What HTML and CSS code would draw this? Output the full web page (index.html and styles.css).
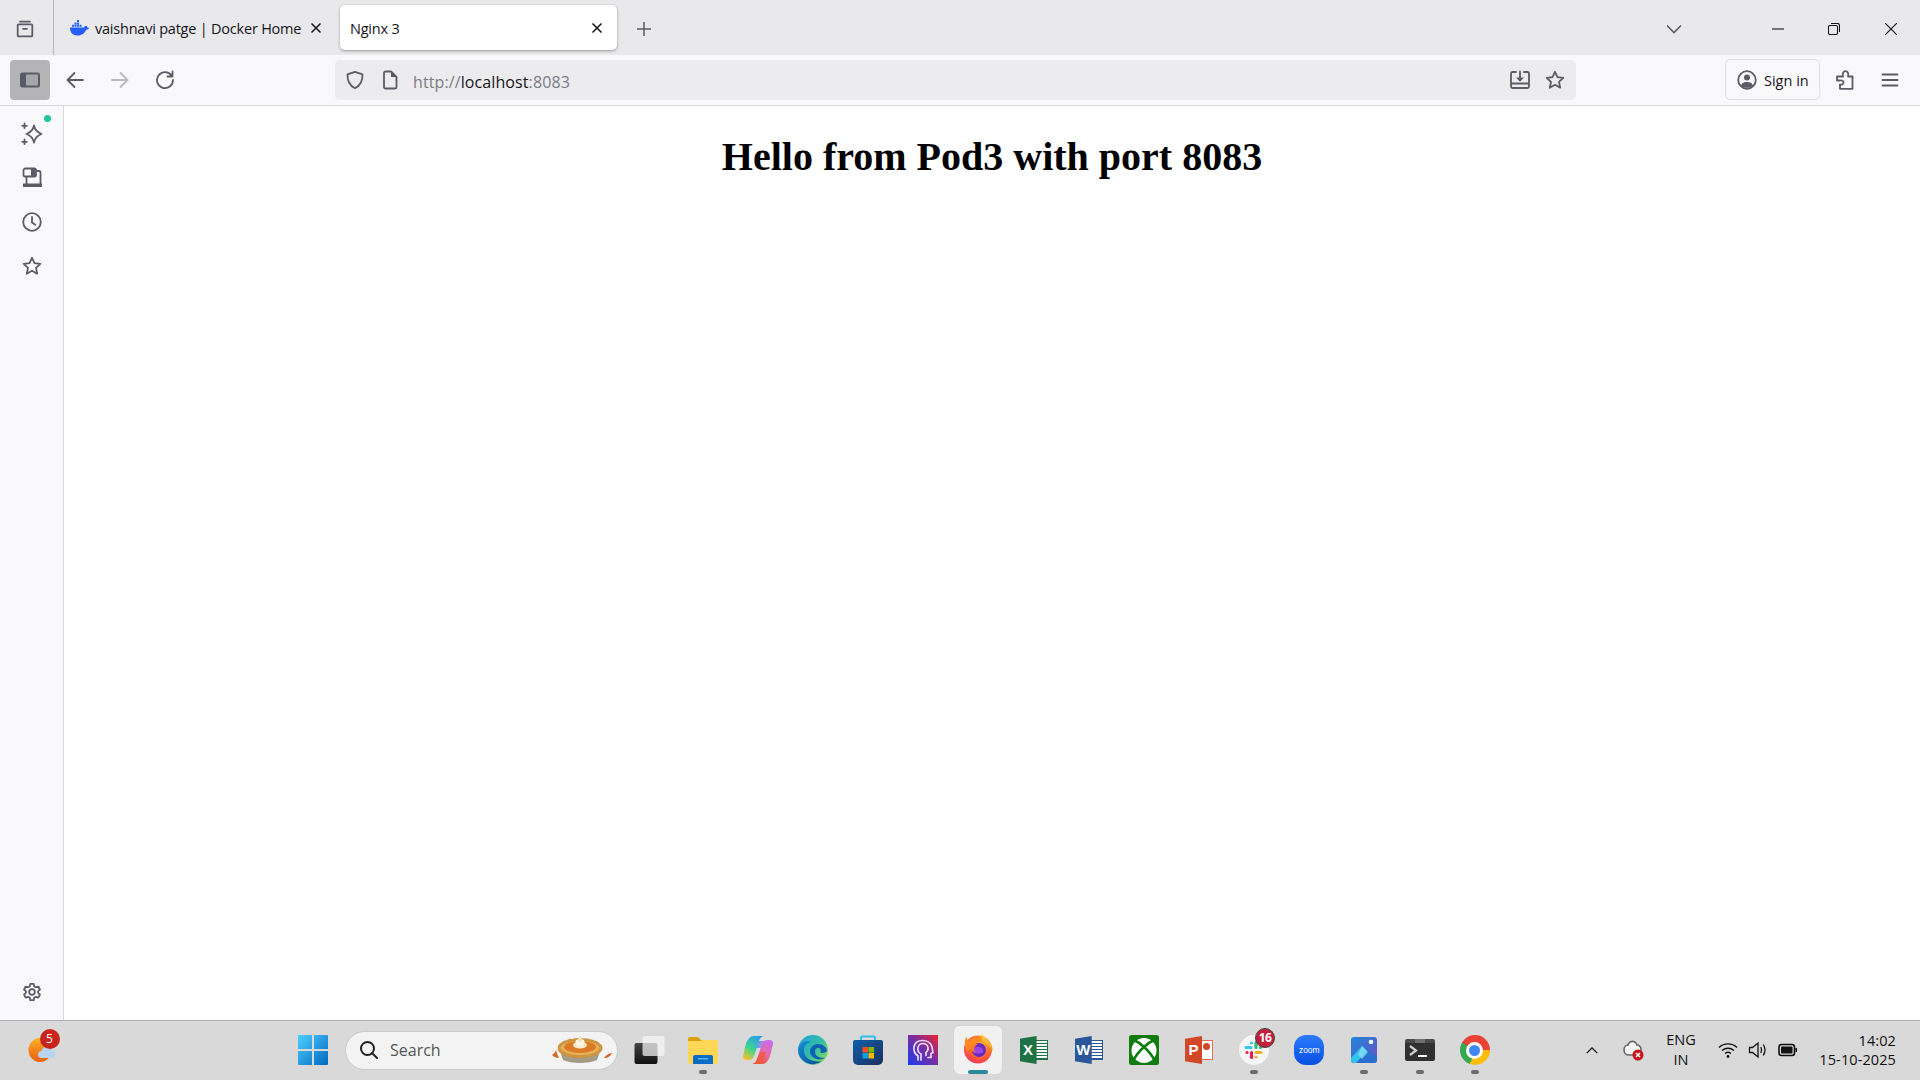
FILE: index.html
```html
<!DOCTYPE html>
<html lang="en">
<head>
<meta charset="utf-8">
<title>Nginx 3</title>
<link rel="stylesheet" href="styles.css">
</head>
<body>
<div class="app">
  <header class="tabbar">
    <div class="view-cell">
      <svg class="ic20" viewBox="0 0 20 20"><path d="M5 2.600h10M3.700 5.400h12.600a1 1 0 0 1 1 1v10a1 1 0 0 1-1 1H3.700a1 1 0 0 1-1-1v-10a1 1 0 0 1 1-1zM8 9.800h4"/></svg>
    </div>
    <div class="tab tab-docker">
      <svg class="fav" viewBox="0 0 20 16"><path fill="#2560ff" d="M1 7.500h14c.4-1 1.400-1.700 2.300-1.800.6.300 1 1 1 1.700.6 0 1.200.1 1.700.5-.6 1.400-1.800 1.800-2.900 1.800-1.200 3.300-4 5.800-8.600 5.800C3.700 15.500 1 12.500 1 7.500z"/><path fill="#2560ff" d="M3 4.800h2v2H3zM5.500 4.800h2v2h-2zM8 4.800h2v2H8zM10.500 4.800h2v2h-2zM5.500 2.400h2v2h-2zM8 2.400h2v2H8zM8 0h2v2H8z"/></svg>
      <span class="tab-title">vaishnavi patge | Docker Home</span>
      <svg class="tab-x" viewBox="0 0 12 12"><path d="M1.500 1.500l9 9M10.500 1.500l-9 9"/></svg>
    </div>
    <div class="tab tab-active">
      <span class="tab-title">Nginx 3</span>
      <svg class="tab-x" viewBox="0 0 12 12"><path d="M1.500 1.500l9 9M10.500 1.500l-9 9"/></svg>
    </div>
    <svg class="newtab" viewBox="0 0 16 16"><path d="M8 1v14M1 8h14"/></svg>
    <div class="win-controls">
      <svg class="chev" viewBox="0 0 16 10"><path d="M1 1.500l7 7 7-7"/></svg>
      <svg class="win-btn win-min" viewBox="0 0 12 12"><path d="M0 6h12"/></svg>
      <svg class="win-btn win-res" viewBox="0 0 12 12"><rect x=".5" y="2.500" width="9" height="9" rx="1.500"/><path d="M3 .5h6.500a2 2 0 0 1 2 2V9"/></svg>
      <svg class="win-btn win-close" viewBox="0 0 12 12"><path d="M0 0l12 12M12 0L0 12"/></svg>
    </div>
  </header>

  <nav class="toolbar">
    <div class="side-toggle">
      <svg class="ic20" viewBox="0 0 20 20"><rect class="panel" x="1" y="3.500" width="18" height="13" rx="1.500"/><rect class="solid" x="1" y="3.500" width="5" height="13" rx="1"/></svg>
    </div>
    <div class="nav-btn"><svg class="ic20" viewBox="0 0 20 20"><path d="M18 10H2.500M9.500 3l-7 7 7 7"/></svg></div>
    <div class="nav-btn nav-off"><svg class="ic20" viewBox="0 0 20 20"><path d="M2 10h15.500M10.500 3l7 7-7 7"/></svg></div>
    <div class="nav-btn"><svg class="ic20" viewBox="0 0 20 20"><path d="M16.500 5.500A8 8 0 1 0 18 10M17.500 1.500v5h-5"/></svg></div>
    <div class="urlbar">
      <svg class="ic20 shield" viewBox="0 0 20 20"><path d="M10 1.800l7.500 2.500c.2 6.500-2.300 11.500-7.500 14-5.200-2.500-7.700-7.500-7.500-14z"/></svg>
      <svg class="ic20 page" viewBox="0 0 20 20"><path d="M4 3a1.500 1.500 0 0 1 1.500-1.500H11L16.500 7v10a1.500 1.500 0 0 1-1.500 1.500H5.500A1.500 1.500 0 0 1 4 17z"/><path class="solid" d="M11 1.500L16.500 7H11z"/></svg>
      <span class="url"><span class="dim">http://</span>localhost<span class="dim">:8083</span></span>
      <svg class="ic20 dl" viewBox="0 0 20 20"><path d="M6 2H2.500A1.500 1.500 0 0 0 1 3.500v13A1.500 1.500 0 0 0 2.500 18h15a1.500 1.500 0 0 0 1.500-1.500v-13A1.500 1.500 0 0 0 17.500 2H14M1 13.500h18M10 1.500v8.500"/><path class="solid" d="M6 7.500h8L10 11.800z"/></svg>
      <svg class="ic20 star" viewBox="0 0 20 20"><path d="M10 1.800l2.500 5.400 5.800.7-4.300 4 1.200 5.800-5.200-2.900-5.200 2.900 1.200-5.800-4.300-4 5.800-.7z"/></svg>
    </div>
    <div class="signin">
      <svg class="ic20" viewBox="0 0 20 20"><circle cx="10" cy="10" r="8.800"/><circle class="solid" cx="10" cy="7.500" r="3"/><path class="solid" d="M4 15.500c1-3 3.500-3.500 6-3.500s5 .5 6 3.500c-1.500 1.500-3.500 2.300-6 2.300s-4.500-.8-6-2.300z"/></svg>
      <span class="signin-text">Sign in</span>
    </div>
    <div class="tool-btn"><svg class="ic20" viewBox="0 0 20 20"><path d="M8 6.500C7 3.500 8.500 1.200 10.500 1.200S14 3.500 13 6.500h4.500v12.300H5v-4.300c2 .5 3.500-.5 3.500-2s-1.500-2.500-3.500-2H2V6.500z"/></svg></div>
    <div class="tool-btn"><svg class="ic20" viewBox="0 0 20 20"><path d="M2.500 4.500h15M2.500 10h15M2.500 15.500h15"/></svg></div>
  </nav>

  <main class="main">
    <aside class="sidebar">
      <div class="side-item side-ai">
        <svg class="ic-ai" viewBox="0 0 24 24"><path d="M14 3.500c1 4.500 3.200 7 7.500 8.500-4.300 1.500-6.500 4-7.500 8.500-1-4.500-3.200-7-7.500-8.500C10.800 10.500 13 8 14 3.500zM4.500 1.500v4.500M2.200 3.800h4.600M4.500 17.500V22M2.200 19.800h4.600"/></svg>
      </div>
      <div class="side-item">
        <svg class="ic-ai" viewBox="0 0 24 24"><rect x="3.500" y="2.500" width="12.500" height="8" rx="1.800"/><rect class="solid" x="11" y="3" width="4.500" height="7"/><path d="M17.500 5h1.500a1.500 1.500 0 0 1 1.500 1.500V18M6.500 11v7"/><path class="solid" d="M3 17.500h19v3.500H3z"/></svg>
      </div>
      <div class="side-item">
        <svg class="ic20" viewBox="0 0 20 20"><circle cx="10" cy="10" r="8.800"/><path d="M10 5v5.500l3.300 2.200"/></svg>
      </div>
      <div class="side-item">
        <svg class="ic20" viewBox="0 0 20 20"><path d="M10 1.800l2.500 5.400 5.800.7-4.300 4 1.200 5.800-5.200-2.900-5.200 2.900 1.200-5.800-4.300-4 5.800-.7z"/></svg>
      </div>
      <div class="side-item side-gear">
        <svg class="ic20" viewBox="0 0 20 20"><circle cx="10" cy="10" r="2.800"/><path d="M8.300 1.800h3.400l.5 2.500 1.700 1 2.400-.8 1.700 3-1.900 1.600v1.800l1.900 1.700-1.700 3-2.400-.8-1.700 1-.5 2.400H8.300l-.5-2.400-1.700-1-2.400.8-1.700-3 1.900-1.700V9.100L2 7.500l1.700-3 2.400.8 1.700-1z"/></svg>
      </div>
    </aside>
    <section class="content">
      <h1>Hello from Pod3 with port 8083</h1>
    </section>
  </main>

  <footer class="taskbar">
    <div class="weather">
      <svg class="weather-ic" viewBox="0 0 32 32"><defs><linearGradient id="sun" x1="0" y1="0" x2="0" y2="1"><stop offset="0" stop-color="#fbb02a"/><stop offset="1" stop-color="#ea5f0c"/></linearGradient></defs><ellipse cx="14" cy="14" rx="11.500" ry="12" fill="url(#sun)"/><path fill="#b9d3f2" d="M15.500 22a3.500 3.500 0 0 1 0-7A5.500 5.500 0 0 1 26 14.500a3.800 3.800 0 0 1 .5 7.500z"/></svg>
      <span class="wx-badge">5</span>
    </div>
    <div class="cell start-cell">
      <svg class="ic-start" viewBox="0 0 30 30"><defs><linearGradient id="win" x1="0" y1="0" x2="1" y2="1"><stop offset="0" stop-color="#4fd0ff"/><stop offset="1" stop-color="#0067c0"/></linearGradient></defs><path fill="url(#win)" d="M0 1a1 1 0 0 1 1-1h13v14H0zM16 0h13a1 1 0 0 1 1 1v13H16zM0 16h14v14H1a1 1 0 0 1-1-1zM16 16h14v13a1 1 0 0 1-1 1H16z"/></svg>
    </div>
    <div class="search">
      <svg class="search-ic" viewBox="0 0 20 20"><circle cx="8.500" cy="8.500" r="6.500"/><path d="M13 13l5 5"/></svg>
      <span class="search-text">Search</span>
      <svg class="pie" viewBox="0 0 62 30"><path fill="#d9642a" d="M1 20c2-1.500 3-2.500 4-5 1 3 2 7 3 8-3 0-5-1-7-3zM61 18c-3 .5-6 2-8 5 3 .5 6-1 8-5z"/><path fill="#a59c86" d="M9 16c6 6 34 6 40 0l-3 9c-8 4-26 4-34 0z"/><ellipse cx="29" cy="13" rx="21" ry="8.500" fill="#e3b05c" stroke="#cf9440" stroke-width="3" stroke-dasharray="3 2.500" stroke-linecap="round"/><ellipse cx="29" cy="12" rx="16" ry="6" fill="#dd7a24"/><ellipse cx="29" cy="10" rx="7" ry="3.500" fill="#f9edd0"/><ellipse cx="29" cy="7" rx="4.500" ry="3" fill="#fff8e8"/><ellipse cx="29" cy="4.500" rx="2" ry="3" fill="#f4e2bc"/></svg>
    </div>
    <div class="cell">
      <svg class="ic30 ovf" viewBox="-1.500 0 30 30"><defs><linearGradient id="tvk" x1="0" y1="0" x2="0" y2="1"><stop offset="0" stop-color="#444"/><stop offset="1" stop-color="#111"/></linearGradient></defs><rect x="0" y="8" width="23" height="21" rx="2" fill="url(#tvk)"/><rect x="8" y="1" width="22" height="20" rx="2" fill="#f6f6f6" fill-opacity=".72"/></svg>
    </div>
    <div class="cell has-dot">
      <svg class="ic30" viewBox="0 0 30 30"><path fill="#d9a20a" d="M0 4a2 2 0 0 1 2-2h8l3 3h17v6H0z"/><path fill="#ffd655" d="M0 6h12.500L15 5h15v22a2 2 0 0 1-2 2H2a2 2 0 0 1-2-2z"/><path fill="#0a6cc4" d="M5 22a2 2 0 0 1 2-2h16a2 2 0 0 1 2 2v7H5z"/><path fill="#56b4ee" d="M10 23h10v1.500H10z"/></svg>
    </div>
    <div class="cell">
      <svg class="ic30" viewBox="0 0 30 30"><defs><linearGradient id="cpa" x1=".7" y1="0" x2=".2" y2="1"><stop offset="0" stop-color="#2a9df0"/><stop offset=".55" stop-color="#3dd68c"/><stop offset="1" stop-color="#f6c12d"/></linearGradient><linearGradient id="cpb" x1=".7" y1="0" x2=".3" y2="1"><stop offset="0" stop-color="#c96de8"/><stop offset=".55" stop-color="#e86aa8"/><stop offset="1" stop-color="#f0552e"/></linearGradient><linearGradient id="cpc" x1="0" y1="0" x2="1" y2="0"><stop offset="0" stop-color="#2fb8e8"/><stop offset="1" stop-color="#d070e8"/></linearGradient></defs><path fill="url(#cpa)" d="M11 1h10c-2.500.5-4 2-5 5l-4.500 14c-1 3-3 5-6 5H3c-2 0-3.500-2-3-4.500l1-3C2.500 8 5 1 11 1z"/><path fill="url(#cpb)" d="M19 29H9c2.500-.5 4-2 5-5l4.500-14c1-3 3-5 6-5H27c2 0 3.500 2 3 4.500l-1 3C27.500 22 25 29 19 29z"/><path fill="url(#cpc)" d="M14.500 6H22c-1.500 1-2.800 2.500-3.500 4l-1 3h-5.500z"/><path fill="#ef5a3c" d="M17.500 17h5.500l-1.500 5c-1 3-3 6-7 7H9c2.500-.5 4-2 5-5z" fill-opacity=".75"/></svg>
    </div>
    <div class="cell">
      <svg class="ic30" viewBox="0 0 30 30"><defs><linearGradient id="eda" x1="0" y1="0" x2="1" y2=".8"><stop offset="0" stop-color="#1d9fdc"/><stop offset=".6" stop-color="#35c1a2"/><stop offset="1" stop-color="#86dc5a"/></linearGradient><linearGradient id="edb" x1="0" y1="0" x2=".8" y2="1"><stop offset="0" stop-color="#1a8fd8"/><stop offset="1" stop-color="#0c4fa0"/></linearGradient></defs><circle cx="15" cy="15" r="15" fill="url(#eda)"/><path fill="url(#edb)" d="M0 15C1 7 8 5 13 7c-5 1-8 5-7 10 1 7 10 11 18 9a15 15 0 0 1-24-11z"/><path fill="#0f5fb3" d="M13 20c-3-5 1-11 7-11 5 0 8 3 9 6 0 2-2 3-5 3-1 0-2-.4-1.500-1.500.5-1 .5-2-.5-3-2-2-5 0-5 3 0 5 5 7 10 6-3 3-10 3-14-2.500z"/></svg>
    </div>
    <div class="cell">
      <svg class="ic30" viewBox="0 0 30 30"><defs><linearGradient id="sto" x1="0" y1="0" x2="1" y2="1"><stop offset="0" stop-color="#0f5ea8"/><stop offset="1" stop-color="#1d2f5f"/></linearGradient></defs><path fill="none" stroke="#2fc1ee" stroke-width="2" d="M8 6V2.500a1 1 0 0 1 1-1h12a1 1 0 0 1 1 1V6"/><path fill="url(#sto)" d="M2 5h26a2 2 0 0 1 2 2v18a5 5 0 0 1-5 5H5a5 5 0 0 1-5-5V7a2 2 0 0 1 2-2z"/><path fill="#f25022" d="M9.500 12H15v5.500H9.500z"/><path fill="#7fba00" d="M15.500 12H21v5.500h-5.500z"/><path fill="#00a4ef" d="M9.500 18h5.500v5.500H9.500z"/><path fill="#ffb900" d="M15.500 18H21v5.500h-5.500z"/></svg>
    </div>
    <div class="cell">
      <svg class="ic30" viewBox="0 0 30 30"><defs><linearGradient id="pur" x1="0" y1="1" x2="1" y2="0"><stop offset="0" stop-color="#1a3cf0"/><stop offset=".55" stop-color="#7c2ea0"/><stop offset="1" stop-color="#f0222e"/></linearGradient></defs><rect width="30" height="30" fill="url(#pur)"/><path fill="none" stroke="#eadcf6" stroke-width="1.700" stroke-linecap="round" d="M10 25v-4c-3-2-4.500-5-4-9 .7-4 4-6.500 8.500-6.500S23 8 24 12c.5 2 .5 4 1 5.500l-2 1v4h-3"/><path fill="none" stroke="#eadcf6" stroke-width="1.700" stroke-linecap="round" d="M13 25v-6c-2-1-3.500-3.500-3-6.500.5-2.500 2.500-4 5-4s4.500 1.500 5 4c.3 2-.5 4-2 5v3"/></svg>
    </div>
    <div class="cell cell-active">
      <svg class="ic32 ovf" viewBox="0 2 32 32"><defs><radialGradient id="ffa" cx=".6" cy=".3" r=".85"><stop offset="0" stop-color="#ffb52e"/><stop offset=".5" stop-color="#ff6a2c"/><stop offset="1" stop-color="#f0256e"/></radialGradient><linearGradient id="ffb" x1="0" y1="0" x2="0" y2="1"><stop offset="0" stop-color="#ffd83a"/><stop offset="1" stop-color="#ff9a24"/></linearGradient></defs><circle cx="16" cy="17.500" r="14" fill="url(#ffa)"/><path fill="url(#ffb)" d="M20 1c1 3.500 4 5.500 6.500 8 3 3 4.500 6 4 10.500-1.500-3.500-3.500-6-7-8-2-1.500-5-5-3.500-10.500z"/><path fill="#ff8a1f" d="M4.500 4.500c.3 2 1 3.500 2.500 4.500 1.500-1.500 3.500-2.500 6-2.500 3 0 6 1.500 7.500 4-2-1-5-1-6.500 0-1 1-2 1.500-4 2-1.500.5-1.500 2-1 3.500L5 20c-2.500-5-3-11-.5-15.500z"/><circle cx="17" cy="18" r="7" fill="#6a2ac0"/><path fill="#9a45e6" d="M11 17c1.500-2 5-3 8-1.500 2 1 3 3 2 5-1.500 1-5 1.500-7 .5s-3-2.500-3-4z"/><path fill="#ff7a2a" d="M9.500 14c2-1.500 4-2 6.500-1.500-2 1-3.500 2-4 4-.5 2 1 4 3 5-3-.5-5.500-2.500-6-5-.2-1 0-1.800.5-2.500z"/></svg>
      <span class="active-bar"></span>
    </div>
    <div class="cell">
      <div class="office off-xl"><span class="off-page"></span><span class="off-tab">X</span></div>
    </div>
    <div class="cell">
      <div class="office off-wd"><span class="off-page"></span><span class="off-tab">W</span></div>
    </div>
    <div class="cell">
      <svg class="ic30" viewBox="0 0 30 30"><rect width="30" height="30" rx="2.500" fill="#107c10"/><circle cx="15" cy="15.500" r="12.500" fill="#fff"/><path fill="none" stroke="#107c10" stroke-width="2.600" d="M4 4.500Q10.500 7.500 15 12Q19.500 7.500 26 4.500M15 12Q8 18 4.500 25.500M15 12Q22 18 25.500 25.500"/></svg>
    </div>
    <div class="cell">
      <div class="office off-pp"><span class="off-page"></span><span class="off-dot"></span><span class="off-tab">P</span></div>
    </div>
    <div class="cell has-dot">
      <svg class="ic30" viewBox="0 0 30 30"><circle cx="15" cy="15" r="15" fill="#f6f6f6"/><g stroke-width="3.200" stroke-linecap="round" fill="none"><path stroke="#36c5f0" d="M7 12.500h5M12.500 8v.01"/><path stroke="#2eb67d" d="M17 7.500v5M21.500 12.500h.01"/><path stroke="#ecb22e" d="M17 17.500h5M17 22v.01"/><path stroke="#e01e5a" d="M12.500 17.500v5M8 17.500h.01"/></g></svg>
      <span class="slack-badge">16</span>
    </div>
    <div class="cell">
      <div class="zoom-ic"><span>zoom</span></div>
    </div>
    <div class="cell has-dot">
      <svg class="ic30" viewBox="0 0 30 30"><defs><linearGradient id="pho" x1="0" y1="0" x2="1" y2="1"><stop offset="0" stop-color="#1f86dc"/><stop offset="1" stop-color="#6a4fc0"/></linearGradient></defs><rect x="2" y="2" width="26" height="26" rx="3" fill="url(#pho)"/><circle cx="22" cy="7" r="2.300" fill="#eef6ff"/><path fill="#2b6fd0" d="M9 28l8-15 11 9v3a3 3 0 0 1-3 3z"/><path fill="#2fc3ef" d="M2 23l11-12 5 5-11 12H5a3 3 0 0 1-3-3z"/><path fill="#8ee3f8" d="M13 11l6 6-6 7-4-4z" fill-opacity=".7"/></svg>
    </div>
    <div class="cell has-dot">
      <svg class="ic30" viewBox="0 0 30 30"><path fill="#303030" d="M0 8h30v16a2 2 0 0 1-2 2H2a2 2 0 0 1-2-2z"/><path fill="#4a4a4a" d="M2 4h26a2 2 0 0 1 2 2v2H0V6a2 2 0 0 1 2-2z"/><path fill="#6e6e6e" d="M10 4h10v4H10z"/><path fill="none" stroke="#cfcfcf" stroke-width="2.200" d="M5 11l6 4.500-6 4.500"/><path stroke="#fff" stroke-width="2" d="M13 21h9"/></svg>
    </div>
    <div class="cell has-dot">
      <div class="chrome"><span class="chrome-in"></span></div>
    </div>
    <div class="tray">
      <div class="tray-item tray-caret"><svg class="ic-tray" viewBox="0 0 16 10"><path d="M2 8l6-6 6 6"/></svg></div>
      <div class="tray-item tray-cloud">
        <svg class="ic-cloud" viewBox="0 0 22 22"><path fill="#f4f4f4" stroke="#666" stroke-width="1.600" d="M8 3c3-1.500 6 0 7 3 2 0 4 2 4 4 0 3-2 5-5 6H7c-3 0-5-2-5-5s2-5 4-5c0-1 1-2 2-3z"/><circle cx="16" cy="16" r="5.500" fill="#c4161c"/><path stroke="#fff" stroke-width="1.500" d="M14 14l4 4M18 14l-4 4"/></svg>
      </div>
      <div class="tray-lang"><span>ENG</span><span>IN</span></div>
      <div class="tray-item"><svg class="ic-tray2" viewBox="0 0 20 20"><path d="M1 7.500c5-4.800 13-4.800 18 0M4 10.500c3.500-3 8.500-3 12 0M7 13.500c2-1.700 4-1.700 6 0"/><circle class="solid" cx="10" cy="16.500" r="1.400"/></svg></div>
      <div class="tray-item"><svg class="ic-tray2" viewBox="0 0 20 20"><path d="M1.500 7.500h3L10 3v14l-5.500-4.500h-3zM12.800 7c1 1.800 1 4.200 0 6M15.300 4.500c2 3.200 2 7.800 0 11"/></svg></div>
      <div class="tray-item"><svg class="ic-tray2 batt" viewBox="0 0 20 20"><rect x="1" y="4.500" width="15.500" height="11" rx="2.500"/><rect class="solid" x="3" y="6.500" width="11.500" height="7" rx="1"/><path class="solid" d="M17.500 8h1.500v4h-1.500z"/></svg></div>
      <div class="clock"><span>14:02</span><span>15-10-2025</span></div>
    </div>
  </footer>
</div>
</body>
</html>
```
FILE: styles.css
```css
* { box-sizing: border-box; }
html, body { margin: 0; height: 100%; overflow: hidden; }
body { font-family: "Open Sans", "Noto Sans", sans-serif; color: #15141a; }
svg { display: block; flex: none; }
.app { display: flex; flex-direction: column; height: 100vh; }

.ic20 { width: 20px; height: 20px; fill: none; stroke: #5b5b66; stroke-width: 1.800; stroke-linejoin: round; stroke-linecap: round; }
.ic-ai { width: 24px; height: 24px; fill: none; stroke: #5b5b66; stroke-width: 1.800; stroke-linejoin: round; stroke-linecap: round; }
.solid { fill: #5b5b66; stroke: none; }

/* tab strip */
.tabbar { display: flex; align-items: center; height: 55px; background: #e9e9ec; flex: none; }
.view-cell { width: 54px; height: 55px; border-right: 1px solid #b5b5ba; display: flex; align-items: center; padding: 2px 0 0 15px; }
.tab { display: flex; align-items: center; height: 45px; width: 277px; font-size: 14.500px; letter-spacing: -.22px; }
.tab-docker { width: 286px; padding: 0 18px 0 15px; }
.fav { width: 20px; height: 16px; margin: 0 6px 0 0; }
.tab-title { flex: 1; padding-top: 2px; white-space: nowrap; overflow: hidden; }
.tab-x { width: 12px; height: 12px; fill: none; stroke: #15141a; stroke-width: 1.500; }
.tab-active { background: #fff; border-radius: 5px; box-shadow: 0 1px 3px rgba(0, 0, 0, .35); padding: 0 14px 0 10px; }
.newtab { width: 16px; height: 16px; margin: 2px 0 0 19px; fill: none; stroke: #5b5b66; stroke-width: 1.500; }
.win-controls { display: flex; align-items: center; margin-left: auto; padding: 2px 23px 0 0; }
.chev { width: 16px; height: 10px; fill: none; stroke: #5b5b66; stroke-width: 1.600; margin-right: 90px; }
.win-btn { width: 12px; height: 12px; fill: none; stroke: #15141a; stroke-width: 1.100; }
.win-min { margin-right: 44px; }
.win-res { margin-right: 45px; }

/* toolbar */
.toolbar { display: flex; align-items: center; height: 51px; padding: 0 10px 1px 10px; background: #f9f9fb; border-bottom: 1px solid #d8d8da; flex: none; }
.toolbar > * { flex: none; }
.side-toggle { width: 40px; height: 40px; margin-right: 2px; border-radius: 4px; background: #b4b4b6; display: flex; align-items: center; justify-content: center; }
.side-toggle .panel { fill: #a6a6aa; stroke-width: 2px; }
.nav-btn { width: 45px; height: 40px; display: flex; align-items: center; justify-content: center; }
.nav-off svg { stroke: #b9b9bf; }
.urlbar { display: flex; align-items: center; width: 1241px; height: 40px; margin-left: 148px; background: #ececee; border-radius: 5px; padding: 0 11px 0 10px; }
.page { margin-left: 15px; }
.url { flex: 1; margin-left: 13px; padding-top: 4px; font-size: 16px; letter-spacing: .1px; color: #15141a; white-space: nowrap; }
.dim { color: #7b7b84; }
.dl { margin-right: 15px; }
.signin { display: flex; align-items: center; gap: 7px; width: 95px; height: 41px; margin-left: 149px; padding-left: 11px; border: 1px solid #dfdfe2; border-radius: 5px; font-size: 14.500px; letter-spacing: 0; }
.signin-text { padding-top: 2px; }
.tool-btn { width: 40px; height: 40px; margin-left: 5px; display: flex; align-items: center; justify-content: center; }

/* main */
.main { flex: 1; display: flex; min-height: 0; }
.sidebar { width: 64px; background: #f9f9fb; border-right: 1px solid #d8d8da; display: flex; flex-direction: column; align-items: center; padding: 6px 0 0 0; }
.side-item { position: relative; width: 32px; height: 44px; display: flex; align-items: center; justify-content: center; flex: none; }
.side-ai::after { content: ""; position: absolute; top: 3px; right: -3px; width: 7px; height: 7px; border-radius: 50%; background: #1fc59e; }
.side-gear { margin-top: auto; margin-bottom: 6px; }
.content { flex: 1; background: #fff; }
h1 { margin: 26.800px 0; font-family: "Liberation Serif", serif; font-size: 40px; font-weight: 700; text-align: center; color: #000; }

/* taskbar */
.taskbar { display: flex; align-items: center; height: 60px; padding-bottom: 1px; flex: none; background: #d9d9d9; border-top: 1px solid #b2b2b2; }
.weather { position: relative; width: 285px; height: 100%; }
.weather-ic { position: absolute; left: 26px; top: 15px; width: 32px; height: 32px; }
.wx-badge { position: absolute; left: 39.500px; top: 8px; width: 20px; height: 20px; border-radius: 50%; background: #c8261c; color: #fff; font-size: 12px; text-align: center; line-height: 20px; }
.cell { position: relative; width: 55.150px; height: 48px; display: flex; align-items: center; justify-content: center; flex: none; }
.start-cell { width: 55px; margin-right: 5px; }
.ic-start { width: 30px; height: 30px; }
.ic30 { width: 30px; height: 30px; }
.ovf { overflow: visible; }
.ic32 { width: 32px; height: 32px; }
.search { display: flex; align-items: center; width: 273px; height: 39px; margin-right: 2px; padding: 0 4px 0 13px; border-radius: 20px; background: #f3f3f3; border: 1px solid #c9c9c9; }
.search-ic { width: 20px; height: 20px; fill: none; stroke: #222; stroke-width: 2; stroke-linecap: round; }
.search-text { flex: 1; margin-left: 11px; font-size: 16px; color: #555; }
.pie { width: 62px; height: 30px; }
.has-dot::after { content: ""; position: absolute; bottom: 0; left: 50%; width: 8px; height: 4px; margin-left: -4px; border-radius: 2px; background: #6b6b6b; }
.cell-active { background: #f1f1f1; border-radius: 5px; width: 48px; margin: 0 3.600px; box-shadow: 0 0 1px rgba(0, 0, 0, .15); }
.active-bar { position: absolute; bottom: 0; left: 14px; width: 20px; height: 4px; border-radius: 2px; background: #2a8a9a; }
.office { position: relative; width: 28px; height: 28px; }
.off-page { position: absolute; right: 0; top: 4px; width: 18px; height: 20px; background: #fff; border: 1.500px solid #888; }
.off-dot { position: absolute; right: 3px; top: 7px; width: 7px; height: 7px; border-radius: 50%; background: #d24726; }
.off-tab { position: absolute; left: 0; top: 0; width: 17px; height: 28px; clip-path: polygon(0 10%, 100% 0, 100% 100%, 0 90%); color: #fff; font: 700 15px/28px "Liberation Sans", sans-serif; text-align: center; }
.off-xl .off-tab { background: #1f7244; }
.off-xl .off-page { border-color: #1f7244; background: repeating-linear-gradient(#fff 0 2px, #1f7244 2px 3px); }
.off-wd .off-tab { background: #2b579a; }
.off-wd .off-page { border-color: #2b579a; background: repeating-linear-gradient(#fff 0 2px, #2b579a 2px 3px); }
.off-pp .off-tab { background: #d24726; }
.off-pp .off-page { border-color: #e0714f; background: #fff; }
.slack-badge { position: absolute; left: 28.500px; top: 1.500px; width: 20px; height: 20px; border-radius: 50%; background: #c41e3a; border: 1px solid #444; color: #fff; font-size: 12px; font-weight: 700; text-align: center; line-height: 18px; letter-spacing: -.5px; }
.zoom-ic { display: flex; align-items: center; justify-content: center; width: 30px; height: 30px; border-radius: 12px; background: linear-gradient(#2b7cff, #0a4fe0); color: #fff; font: 400 8.500px "Liberation Sans", sans-serif; }
.chrome { display: flex; align-items: center; justify-content: center; width: 30px; height: 30px; border-radius: 50%; background: conic-gradient(from -60deg, #ea4335 0 150deg, #fbbc04 150deg 260deg, #34a853 260deg 360deg); }
.chrome-in { border-radius: 50%; background: #4285f4; border: 3px solid #fff; box-sizing: content-box; width: 11px; height: 11px; }

/* tray */
.tray { display: flex; align-items: center; margin-left: auto; padding-right: 24px; }
.tray-item { width: 30px; display: flex; justify-content: center; }
.tray-caret { width: 40px; margin-right: 1px; }
.tray-cloud { width: 40px; }
.ic-tray { width: 14px; height: 9px; fill: none; stroke: #111; stroke-width: 1.600; }
.ic-cloud { width: 22px; height: 22px; }
.ic-tray2 { width: 20px; height: 20px; fill: none; stroke: #111; stroke-width: 1.300; }
.ic-tray2 .solid { fill: #111; }
.batt rect:first-child { stroke-width: 1.600; }
.tray-lang { display: flex; flex-direction: column; align-items: center; width: 56px; margin-right: 4px; font-size: 14.500px; line-height: 20px; letter-spacing: 0; color: #111; }
.clock { display: flex; flex-direction: column; align-items: flex-end; width: 90px; margin-left: 3px; font-size: 14.500px; line-height: 19.500px; letter-spacing: .1px; color: #111; }
```
